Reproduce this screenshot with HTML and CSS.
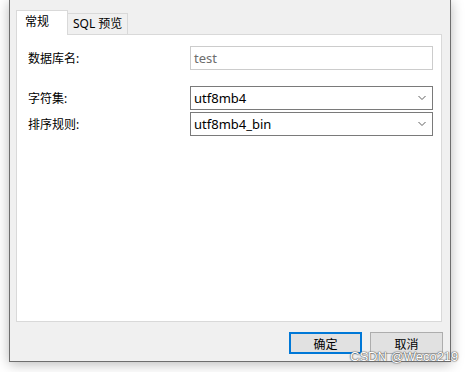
FILE: index.html
```html
<!DOCTYPE html>
<html lang="zh-CN">
<head>
  <meta charset="UTF-8" />
  <title>新建数据库</title>
  <link rel="stylesheet" href="styles.css">
</head>
<body>
  <div class="window">
    <!-- 标签页 -->
    <div class="tabs">
      <div class="tab active">常规</div>
      <div class="tab">SQL 预览</div>
    </div>

    <!-- 常规 -->
    <div class="panel">
      <div class="form-row">
        <label>数据库名:</label>
        <div class="field disabled">test</div>
      </div>
      <div class="form-row gap-top">
        <label>字符集:</label>
        <div class="field select">
          <span>utf8mb4</span>
          <svg class="chev" width="10" height="6" viewBox="0 0 10 6"><path d="M1.5 1 L5 4.5 L8.5 1" fill="none" stroke="#606060" stroke-width="1"/></svg>
        </div>
      </div>
      <div class="form-row tight">
        <label>排序规则:</label>
        <div class="field select">
          <span>utf8mb4_bin</span>
          <svg class="chev" width="10" height="6" viewBox="0 0 10 6"><path d="M1.5 1 L5 4.5 L8.5 1" fill="none" stroke="#606060" stroke-width="1"/></svg>
        </div>
      </div>
    </div>

    <div class="buttons">
      <button class="btn primary">确定</button>
      <button class="btn">取消</button>
    </div>
  </div>

  <div class="watermark">CSDN @Weco219</div>
</body>
</html>
```

FILE: styles.css
```css
body {
  margin: 0;
  width: 468px;
  height: 372px;
  background: #fff;
  font-family: "Noto Sans", "Noto Sans CJK SC", sans-serif;
  font-size: 12px;
  color: #000;
  overflow: hidden;
  position: relative;
}

.window {
  margin-left: 9px;
  width: 442px;
  height: 362px;
  box-sizing: border-box;
  background: #f0f0f0;
  border: 1px solid #6e6e6e;
  border-top: none;
  box-shadow: 0 2px 12px rgba(0,0,0,0.28);
  padding: 10px 0 0 6px;
  display: flex;
  flex-direction: column;
}

.tabs {
  display: flex;
  align-items: flex-end;
  height: 24px;
}

.tab {
  box-sizing: border-box;
  height: 21px;
  padding: 0 5px;
  border: 1px solid #d9d9d9;
  border-bottom: none;
  border-left: none;
  background: #f0f0f0;
  line-height: 20px;
}

.tab.active {
  width: 52px;
  height: 25px;
  padding-left: 8px;
  background: #fff;
  border-left: 1px solid #d9d9d9;
  margin-bottom: -1px;
  position: relative;
  z-index: 1;
  line-height: 22px;
}

.panel {
  width: 426px;
  height: 288px;
  box-sizing: border-box;
  background: #fff;
  border: 1px solid #d9d9d9;
  padding: 11px 8px 0 11px;
}

.form-row {
  display: grid;
  grid-template-columns: 162px 1fr;
  align-items: center;
}

.form-row.gap-top {
  margin-top: 16px;
}

.form-row.tight {
  margin-top: 2px;
}

.field {
  box-sizing: border-box;
  height: 24px;
  border: 1px solid #7a7a7a;
  padding: 0 3px;
  line-height: 22px;
  display: flex;
  align-items: center;
  justify-content: space-between;
  background: #fff;
  font-size: 13px;
}

.field.disabled {
  border-color: #ccc;
  color: #6d6d6d;
}

.chev {
  margin-right: 2px;
}

.buttons {
  display: flex;
  justify-content: flex-end;
  gap: 8px;
  margin-top: 10px;
  padding-right: 7px;
}

.btn {
  width: 73px;
  height: 22px;
  box-sizing: border-box;
  background: #e1e1e1;
  border: 1px solid #adadad;
  font-family: "Noto Sans CJK SC", sans-serif;
  font-size: 12px;
  padding: 0;
  color: #000;
}

.btn.primary {
  border: 2px solid #0078d7;
}

.watermark {
  position: absolute;
  left: 350px;
  top: 349px;
  font-family: "Liberation Sans", sans-serif;
  font-size: 13px;
  color: #fff;
  text-shadow: 0 0 1px #555, 0 0 1px #555, 0 0 2px #777;
}
```
